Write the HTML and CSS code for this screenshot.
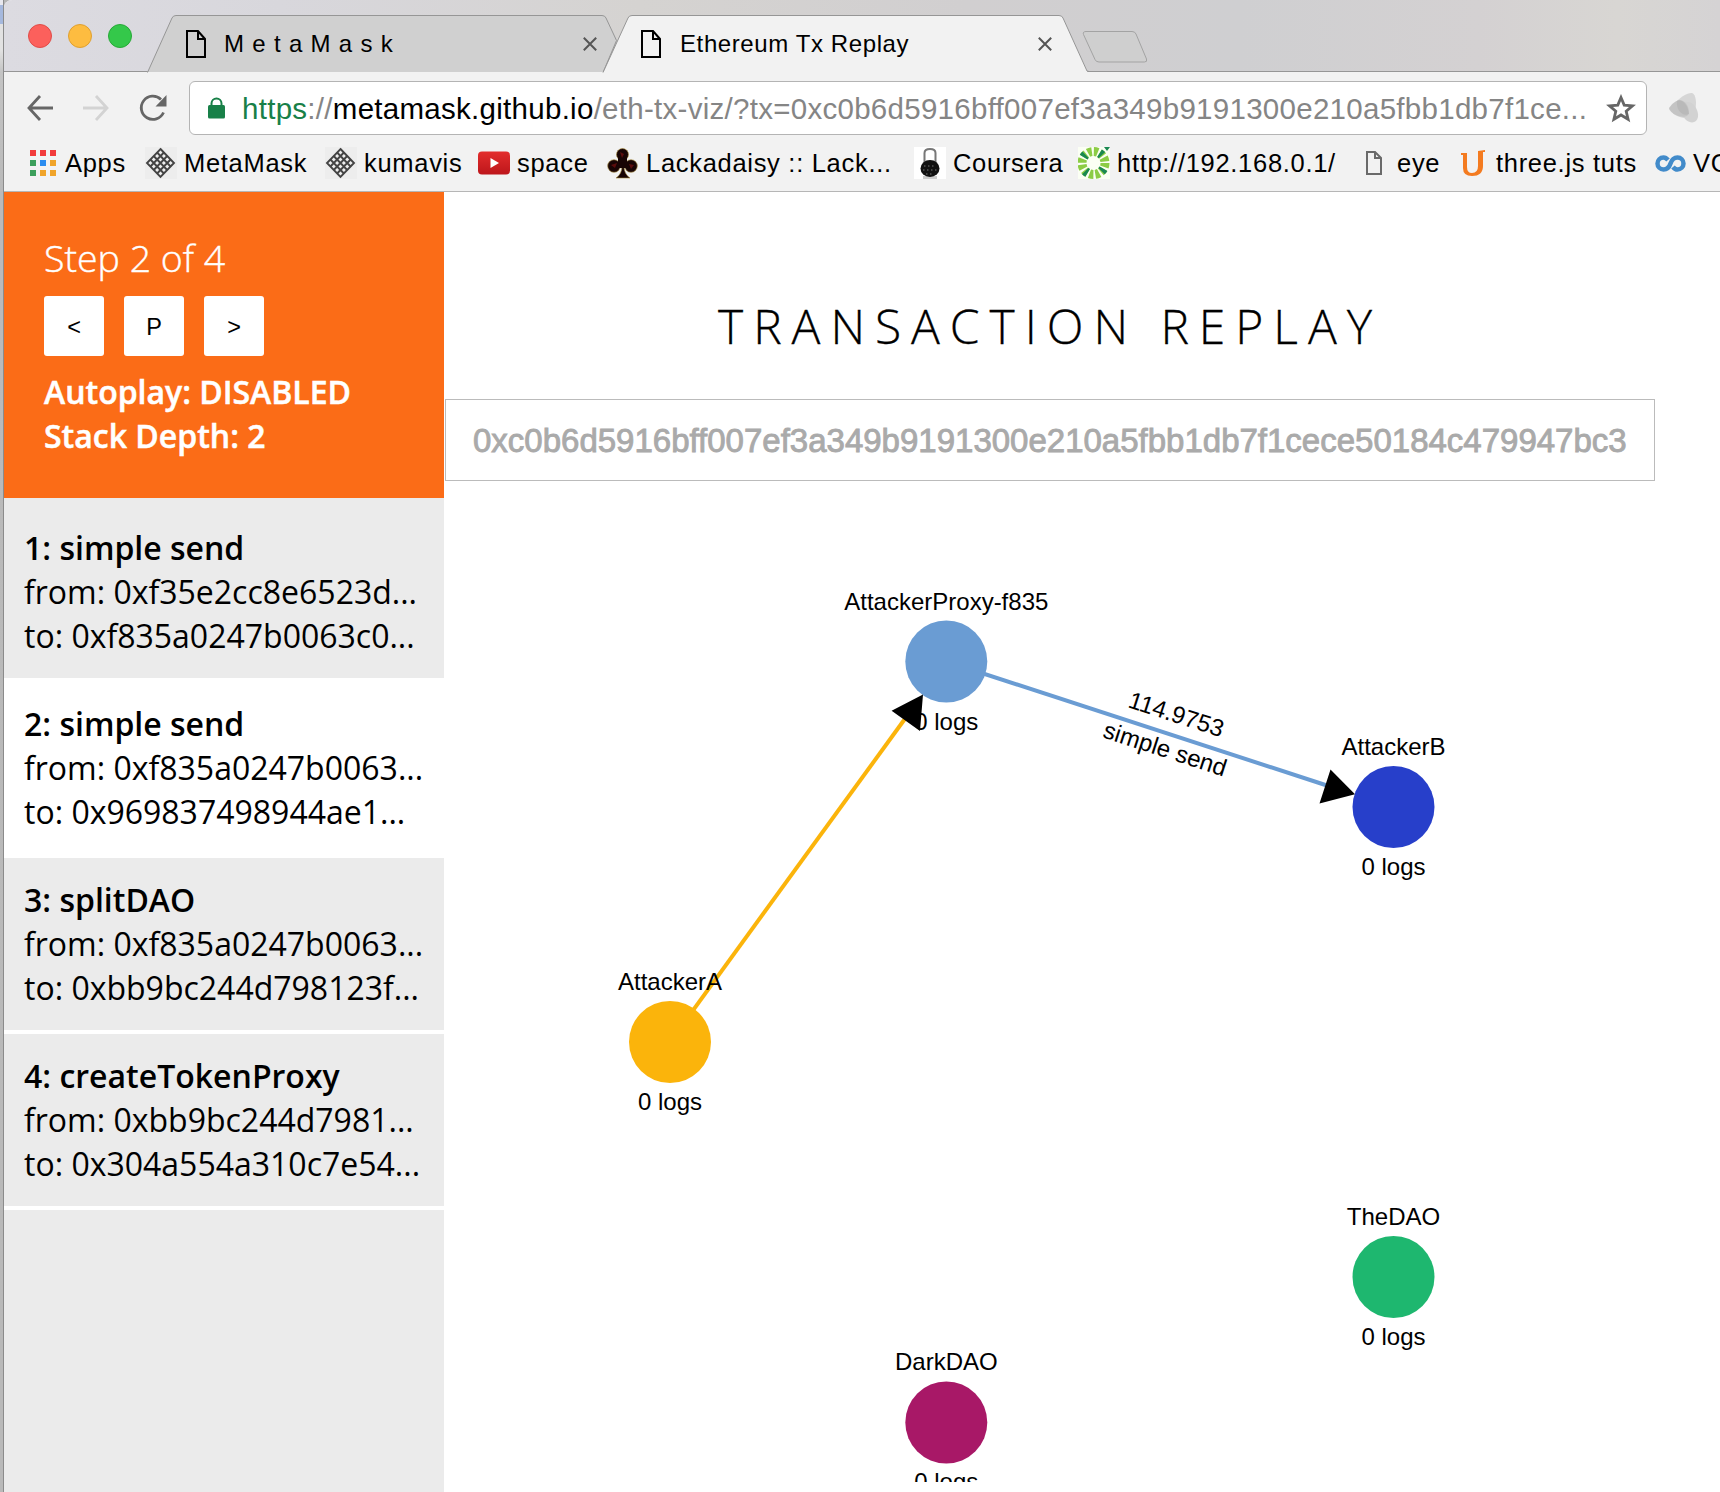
FILE: index.html
```html
<!DOCTYPE html>
<html lang="en">
<head>
<meta charset="utf-8">
<title>Ethereum Tx Replay</title>
<link rel="stylesheet" href="styles.css">
</head>
<body>
<div class="desktop">
  <div class="desktop-edge"></div>
  <div class="window">
    <header class="tabstrip">
      <div class="lights"><i class="light red"></i><i class="light yellow"></i><i class="light green"></i></div>
      <div class="tab tab-back">
        <svg class="tab-shape" width="472" height="58" viewBox="0 0 472 58"><path d="M.5 57 25 3q1-2.5 4-2.5h426q3 0 4 2.5l12 24L458 57z" fill="#d0d0d0"/><path d="M.5 57.500 25 3q1-2.500 4-2.500h426q3 0 4 2.500L469.500 25.500 456 57.500" fill="none" stroke="#969696"/></svg>
        <svg class="page" width="20" height="28" viewBox="0 0 20 28"><path d="M1 1h11l7 8v18H1zM12 1v8h7" fill="none" stroke="#000" stroke-width="2"/></svg>
        <span class="tab-title spaced">MetaMask</span>
        <svg class="close" width="14" height="14" viewBox="0 0 14 14"><path d="M.8.8l12.400 12.400M13.200.8.8 13.200" stroke="#555" stroke-width="2"/></svg>
      </div>
      <div class="tab tab-front">
        <svg class="tab-shape" width="486" height="58" viewBox="0 0 486 58"><path d="M0 58 25 3q1-2.500 4-2.500h427q3 0 4 2.500L485 58z" fill="#f2f2f2"/><path d="M0 57.500 25 3q1-2.500 4-2.500h427q3 0 4 2.500L484 56l2 .5" fill="none" stroke="#969696"/></svg>
        <svg class="page" width="20" height="28" viewBox="0 0 20 28"><path d="M1 1h11l7 8v18H1zM12 1v8h7" fill="none" stroke="#000" stroke-width="2"/></svg>
        <span class="tab-title">Ethereum Tx Replay</span>
        <svg class="close" width="14" height="14" viewBox="0 0 14 14"><path d="M.8.8l12.400 12.400M13.200.8.8 13.200" stroke="#555" stroke-width="2"/></svg>
      </div>
      <svg class="newtab" width="66" height="32" viewBox="0 0 66 32"><path d="M4 .5h46q3 0 4 2.500l10.500 25q1 3-2 3H17q-3 0-4-2.500L1.500 3.500Q.5.5 4 .5z" fill="#cfcfcf" stroke="#a3a3a3"/></svg>
    </header>

    <div class="toolbar">
      <svg class="nav" width="26" height="26" viewBox="0 0 26 26"><path d="M13 1 2 13l11 12M2 13h24" fill="none" stroke="#666" stroke-width="2.800"/></svg>
      <svg class="nav" width="26" height="26" viewBox="0 0 26 26"><path d="M13 1l11 12-11 12M24 13H0" fill="none" stroke="#d3d3d3" stroke-width="2.800"/></svg>
      <svg class="nav" width="28" height="28" viewBox="0 0 28 28"><path d="M24.500 18.500A11.600 11.600 0 1 1 22 5.500" fill="none" stroke="#666" stroke-width="2.800"/><path d="M27.500 1v11.500H16.500z" fill="#666"/></svg>
      <div class="omnibox">
        <svg class="lock" width="17" height="22" viewBox="0 0 17 22"><path d="M3.500 10V6.500a5 5 0 0 1 10 0V10" fill="none" stroke="#188048" stroke-width="2"/><rect x="0" y="8" width="17" height="13.500" rx="1.500" fill="#188048"/></svg>
        <div class="url"><span class="scheme">https</span><span class="dim">://</span>metamask.github.io<span class="dim">/eth-tx-viz/?tx=0xc0b6d5916bff007ef3a349b9191300e210a5fbb1db7f1ce...</span></div>
        <svg class="star" width="30" height="29" viewBox="0 0 30 29"><path d="M15 3.500l3.200 7.600 8.300.7-6.300 5.400 1.900 8.100L15 21l-7.100 4.300 1.900-8.100-6.300-5.400 8.300-.7z" fill="none" stroke="#666" stroke-width="2.800"/></svg>
      </div>
      <svg class="ext" width="31" height="32" viewBox="0 0 31 32"><path d="M1 17C6 11 17 0 24 1c4 1 5 11 3 17-2 4-5 7-11 8C9 25 3 21 1 17z" fill="#d6d6d6"/><path d="M17 10c8-2 14 8 13 15-1 6-7 7-12 3-5-5-8-13-1-18z" fill="#d2d2d2"/><path d="M1 16C6 9 11 7 15 9c5 3 7 9 5 14-3 4-16 1-19-7z" fill="#c4c4c4"/><path d="M9 9c4-3 11 3 12 13-6 3-13-3-12-13z" fill="#b9b9b9"/></svg>
    </div>

    <nav class="bookmarks">
      <div class="bm apps"><svg width="26" height="26" viewBox="0 0 26 26"><path d="M0 0h6v6H0zM10 0h6v6h-6zM20 0h6v6h-6z" fill="#f23c3c"/><path d="M0 10h6v6H0zM0 20h6v6H0z" fill="#3c9f5b"/><path d="M10 10h6v6h-6z" fill="#2a8cf0"/><path d="M20 10h6v6h-6zM10 20h6v6h-6zM20 20h6v6h-6z" fill="#f0a42a"/></svg><span>Apps</span></div>
      <div class="bm"><svg width="32" height="32" viewBox="0 0 32 32"><path d="M0 0h32v32H0z" fill="#ededed"/><g fill="none" stroke="#444" stroke-width="1.900"><path d="M15.500 2 29 16 15.500 30 2 16z"/><path d="M12.100 5.500l13.500 14M8.700 9l13.500 14M5.400 12.500l13.500 14M18.900 5.500l-13.500 14M22.200 9 8.700 23M25.600 12.500l-13.500 14"/></g></svg><span>MetaMask</span></div>
      <div class="bm"><svg width="32" height="32" viewBox="0 0 32 32"><path d="M0 0h32v32H0z" fill="#ededed"/><g fill="none" stroke="#444" stroke-width="1.900"><path d="M15.500 2 29 16 15.500 30 2 16z"/><path d="M12.100 5.500l13.500 14M8.700 9l13.500 14M5.400 12.500l13.500 14M18.900 5.500l-13.500 14M22.200 9 8.700 23M25.600 12.500l-13.500 14"/></g></svg><span>kumavis</span></div>
      <div class="bm"><svg width="32" height="32" viewBox="0 0 32 32"><defs><linearGradient id="yt" x2="0" y2="1"><stop stop-color="#e32d2c"/><stop offset="1" stop-color="#bd161b"/></linearGradient></defs><rect y="4.500" width="32" height="23" rx="4" fill="url(#yt)"/><path d="M12.500 11v10l8.500-5z" fill="#fff"/></svg><span>space</span></div>
      <div class="bm"><svg width="32" height="32" viewBox="0 0 32 32"><g fill="#180404" stroke="#a68a3a" stroke-width=".6"><path d="M9 31q6-4 6-12h2q0 8 6 12z"/><circle cx="15.500" cy="7.500" r="6"/><circle cx="7" cy="19" r="6.300"/><circle cx="24" cy="19" r="6.300"/></g><path d="M11 11h9v10h-9z" fill="#180404"/><path d="M13 5l4 2-2 4zM4 18l6-2-2 5zM22 17l5 1-3 4z" fill="#5a0c0c"/></svg><span>Lackadaisy :: Lack...</span></div>
      <div class="bm"><svg width="32" height="32" viewBox="0 0 32 32"><path d="M0 0h32v32H0z" fill="#fff"/><path d="M10.500 17V6q0-4 5.500-4t5.500 4v11" fill="none" stroke="#777" stroke-width="2"/><path d="M9 29h14v3H9z" fill="#ccc"/><ellipse cx="16" cy="21.500" rx="9.500" ry="8.500" fill="#111"/><path d="M10 19h12M9 23h14M12 27h8" stroke="#777" stroke-dasharray="1.500 2.500"/></svg><span>Coursera</span></div>
      <div class="bm"><svg width="32" height="32" viewBox="0 0 32 32"><path d="M0 0h32v32H0z" fill="#fbfff4"/><circle cx="15.500" cy="16" r="11.500" fill="none" stroke="#8ccc45" stroke-width="9" stroke-dasharray="4 2.020"/><circle cx="15.500" cy="16" r="11.500" fill="none" stroke="#1a8852" stroke-width="9" stroke-dasharray="3 15.060" stroke-dashoffset="-6"/><path d="M26 0h6l-3 4z" fill="#1a8852"/></svg><span>http://192.168.0.1/</span></div>
      <div class="bm eye"><svg width="16" height="24" viewBox="0 0 16 24"><path d="M1 1h8l6 6v16H1zM9 1v6h6" fill="none" stroke="#6a6a6a" stroke-width="2"/></svg><span>eye</span></div>
      <div class="bm tuts"><svg width="25" height="27" viewBox="0 0 25 27"><path d="M0 3h6v14q0 6 5 6 6 0 6-7V1l7-1v2h-2v14q0 10-11 10Q2 26 2 18V5H0z" fill="#f47b20"/></svg><span>three.js tuts</span></div>
      <div class="bm vg"><svg width="31" height="17" viewBox="0 0 31 17"><path d="M13 5Q11 2.500 8.500 2.500a6 6 0 0 0 0 12c4.500 0 6-3 7-6s3-6 7-6a6 6 0 0 1 0 12Q20 14.500 18 12" fill="none" stroke="#428bca" stroke-width="4.500"/></svg><span>VG</span></div>
    </nav>

    <div class="content">
      <aside class="sidebar">
        <section class="controls">
          <h2>Step 2 of 4</h2>
          <div class="buttons"><button>&lt;</button><button>P</button><button>&gt;</button></div>
          <p>Autoplay: DISABLED</p>
          <p>Stack Depth: 2</p>
        </section>
        <ol class="steps">
          <li><b>1: simple send</b><span>from: 0xf35e2cc8e6523d...</span><span>to: 0xf835a0247b0063c0...</span></li>
          <li class="current"><b>2: simple send</b><span>from: 0xf835a0247b0063...</span><span>to: 0x969837498944ae1...</span></li>
          <li><b>3: splitDAO</b><span>from: 0xf835a0247b0063...</span><span>to: 0xbb9bc244d798123f...</span></li>
          <li><b>4: createTokenProxy</b><span>from: 0xbb9bc244d7981...</span><span>to: 0x304a554a310c7e54...</span></li>
        </ol>
      </aside>
      <main class="main">
        <h1>TRANSACTION REPLAY</h1>
        <div class="hash">0xc0b6d5916bff007ef3a349b9191300e210a5fbb1db7f1cece50184c479947bc3</div>
        <svg class="graph" width="1276" height="1001" viewBox="444 481 1276 1001">
          <path d="M670 1042 907 716" stroke="#fbb40b" stroke-width="4"/>
          <path d="M946.300 661.500 1330 786.500" stroke="#6a9cd3" stroke-width="4"/>
          <circle cx="946.300" cy="661.500" r="41" fill="#6a9cd3"/>
          <circle cx="1393.500" cy="807" r="41" fill="#273fca"/>
          <circle cx="670" cy="1042" r="41" fill="#fbb40b"/>
          <circle cx="1393.500" cy="1277" r="41" fill="#1eb76f"/>
          <circle cx="946.300" cy="1422.500" r="41" fill="#a81867"/>
          <g class="labels">
            <text x="946.300" y="610">AttackerProxy-f835</text><text x="946.300" y="730">0 logs</text>
            <text x="1393.500" y="755">AttackerB</text><text x="1393.500" y="875">0 logs</text>
            <text x="670" y="990">AttackerA</text><text x="670" y="1110">0 logs</text>
            <text x="1393.500" y="1225">TheDAO</text><text x="1393.500" y="1345">0 logs</text>
            <text x="946.300" y="1370">DarkDAO</text><text x="946.300" y="1490">0 logs</text>
            <g transform="translate(1170 734) rotate(18)"><text x="0" y="-12.500">114.9753</text><text x="0" y="24">simple send</text></g>
          </g>
          <path d="M923 694.500 891.600 710.700 920 731zM1355 794.300 1330.500 769.500 1319.500 803.500z"/>
        </svg>
      </main>
    </div>
  </div>
</div>
</body>
</html>
```
FILE: styles.css
```css
* { box-sizing: border-box; }
body { margin: 0; font-family: "Liberation Sans", Arial, sans-serif; color: #000; background: #fff; }
.desktop { display: flex; width: 1720px; height: 1492px; overflow: hidden; background: #b4b4b4; }
.desktop-edge { width: 4px; flex: none; border-right: 1px solid #8b8b8b; background: linear-gradient(#e8e8ee 0 5px, #a5b8dd 5px 24px, #e2e2e2 24px 50px, #c4c4c4 72px, #bababa 192px, #b9b9b9); }
.window { flex: 1; min-width: 0; display: flex; flex-direction: column; background: #fff; border-top-left-radius: 8px; overflow: hidden; }

.tabstrip { height: 72px; flex: none; display: flex; align-items: flex-start; padding: 14px 0 0 24px; border-bottom: 1px solid #969696; background: linear-gradient(90deg, #dcdbe1 0, #d8d7dc 16%, #d5d3d1 37%, #d1cfd0 56%, #cfcfd1 72%, #d4d1d2 86%, #d8d6d3 94%, #d5d3d4); }
.lights { display: flex; gap: 16px; width: 119px; flex: none; padding-top: 10px; }
.light { width: 24px; height: 24px; border-radius: 50%; border: 1px solid; }
.red { background: #fc605c; border-color: #e04c48; }
.yellow { background: #fdbc40; border-color: #dfa030; }
.green { background: #34c84a; border-color: #27a937; }
.tab { position: relative; height: 58px; display: flex; align-items: center; padding: 1px 0 0 39px; flex: none; }
.tab-back { width: 456px; }
.tab-front { width: 479px; padding-left: 38px; }
.tab-shape { position: absolute; left: 0; top: 1px; z-index: 0; }
.page, .tab-title, .close { position: relative; z-index: 1; flex: none; }
.tab-title { width: 377px; padding-left: 19px; font-size: 24px; letter-spacing: .6px; white-space: nowrap; }
.spaced { padding-left: 18px; letter-spacing: 8.3px; }
.newtab { margin-top: 17px; }

.toolbar { height: 63px; flex: none; display: flex; align-items: center; padding: 0 0 1px 23px; background: #f2f2f2; }
.nav { margin-right: 30px; flex: none; }
.omnibox { width: 1458px; height: 54px; margin: 10px 0 0 -8px; flex: none; display: flex; align-items: center; padding-left: 18px; background: #fff; border: 1px solid #b4b4b4; border-radius: 6px; }
.toolbar > .nav, .toolbar > .ext { margin-top: 9px; }
.url { width: 1365px; padding: 2px 0 0 17px; font-size: 29.5px; line-height: 34px; letter-spacing: .28px; white-space: nowrap; }
.scheme { color: #188048; }
.dim { color: #858585; }
.star { margin-left: 16px; flex: none; }
.lock { flex: none; }
.ext { margin-left: 21px; flex: none; }

.bookmarks { height: 57px; flex: none; display: grid; grid-template-columns: 115px 180px 153px 129px 307px 164px 288px 95px 194px 65px; padding: 0 0 0 26px; border-bottom: 1px solid #b6b6b6; background: #f2f2f2; font-size: 25.5px; letter-spacing: .7px; overflow: hidden; }
.bm { display: flex; align-items: center; gap: 7px; white-space: nowrap; min-width: 0; }
.bm svg { flex: none; }
.apps { gap: 9px; }
.eye { gap: 15px; }
.tuts { gap: 10px; }

.content { flex: 1; display: flex; min-height: 0; }
.sidebar { width: 440px; flex: none; background: #ebebeb; font-family: "Open Sans", "Noto Sans", sans-serif; font-size: 32px; line-height: 44px; }
.controls { height: 306px; padding: 39px 40px; color: #fff; background: #fb6c17; }
.controls h2 { margin: 0 0 12px; font-size: 37.5px; line-height: 53px; font-weight: 300; -webkit-text-stroke: .4px #fff; }
.controls p { margin: 0; font-weight: 600; -webkit-text-stroke: .5px #fff; }
.buttons { display: flex; gap: 20px; margin-bottom: 14px; }
.buttons button { width: 60px; height: 60px; padding: 2px 0 0; border: 0; border-radius: 3px; background: #fff; color: #000; font: 23.5px "Liberation Sans", Arial, sans-serif; }
.steps { list-style: none; margin: 8px 0 0; padding: 0; }
.steps li { height: 176px; padding: 20px; border-bottom: 4px solid #fff; white-space: nowrap; }
.steps .current { background: #fff; }
.steps b, .steps span { display: block; }
.steps b { font-weight: 600; }

.main { flex: 1; min-width: 0; display: flex; flex-direction: column; align-items: flex-start; }
.main h1 { width: 1212px; margin: 0; padding-top: 101px; height: 207px; text-align: center; font: 300 48px/66px "Open Sans", "Noto Sans", sans-serif; letter-spacing: 9.95px; -webkit-text-stroke: .3px #000; }
.hash { width: 1210px; height: 82px; margin-left: 1px; padding-left: 27px; border: 1px solid #bbb; color: #aaa; font-size: 33px; line-height: 81px; white-space: nowrap; -webkit-text-stroke: .9px #aaa; }
.graph { display: block; overflow: hidden; }
.labels { font-size: 24px; text-anchor: middle; }
```
